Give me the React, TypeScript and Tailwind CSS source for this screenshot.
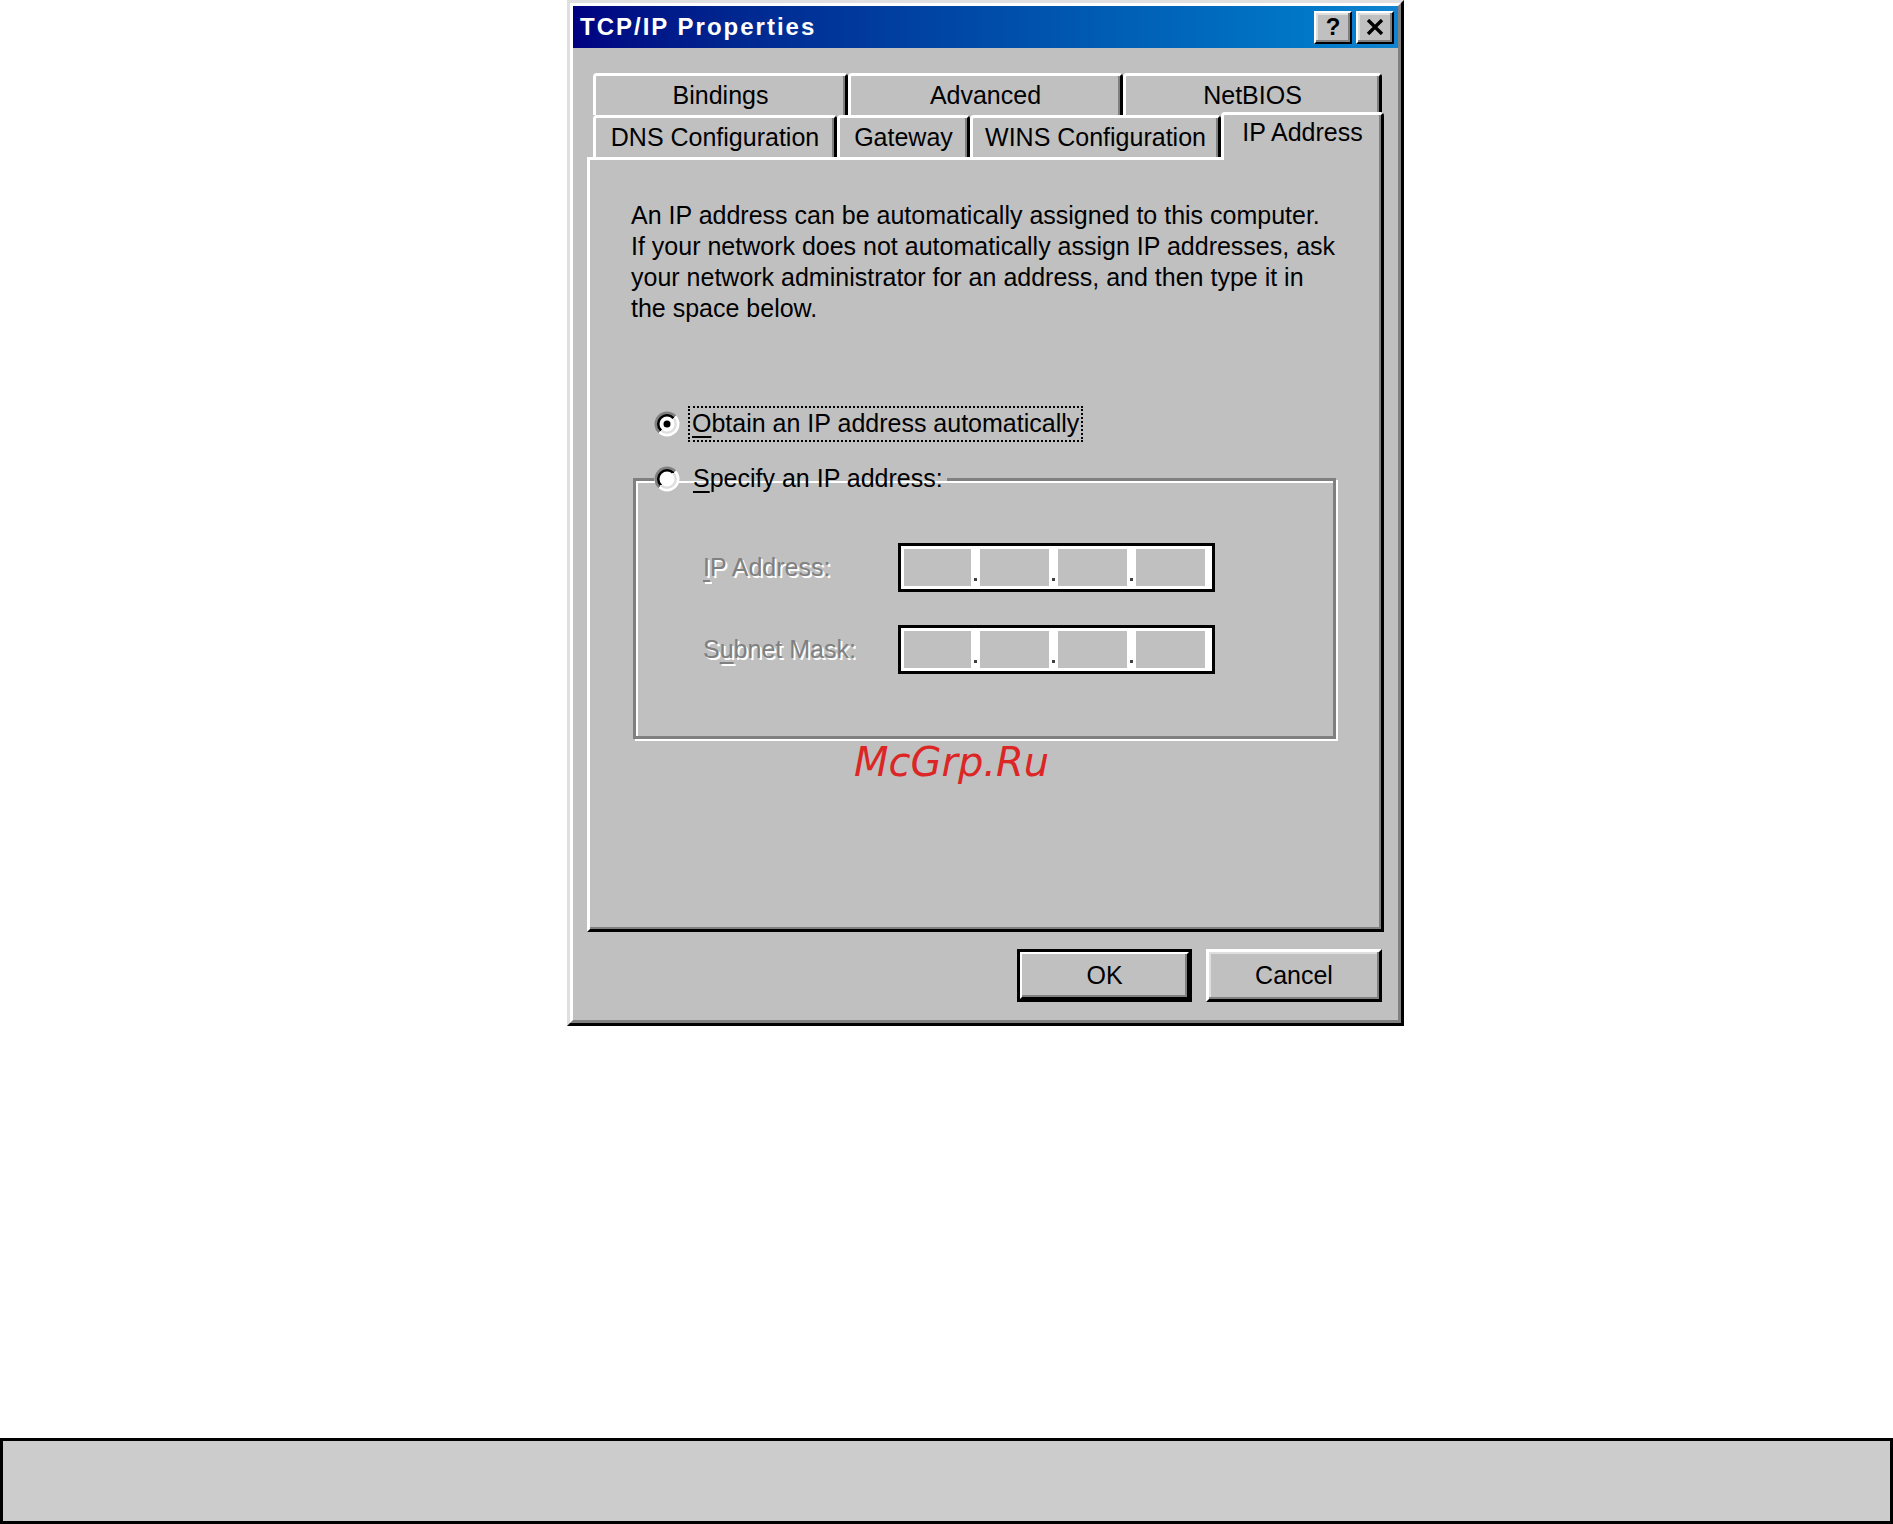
import React, { useId } from "react";

type TabProps = { label: string; width: string; selected?: boolean };

function Tab({ label, width, selected }: TabProps) {
  if (selected) {
    return (
      <div
        className={`${width} relative z-10 h-[48px] -mb-[3px] flex items-start justify-center leading-[34px] bg-[#c0c0c0] border-l-[3px] border-t-[3px] border-r-[3px] border-l-white border-t-white border-r-black rounded-t-[4px] shadow-[inset_-2px_0_0_#808080]`}
      >
        {label}
      </div>
    );
  }
  return (
    <div
      className={`${width} h-[42px] flex items-center justify-center bg-[#c0c0c0] border-l-[3px] border-t-[3px] border-r-[3px] border-l-white border-t-white border-r-black rounded-t-[4px] shadow-[inset_-2px_0_0_#808080]`}
    >
      {label}
    </div>
  );
}

function Radio({ checked }: { checked?: boolean }) {
  const id = useId().replace(/:/g, "");
  return (
    <svg width="26" height="26" viewBox="0 0 26 26" className="shrink-0">
      <defs>
        <linearGradient id={`o${id}`} x1="0" y1="0" x2="1" y2="1">
          <stop offset="0.5" stopColor="#808080" />
          <stop offset="0.5" stopColor="#ffffff" />
        </linearGradient>
        <linearGradient id={`i${id}`} x1="0" y1="0" x2="1" y2="1">
          <stop offset="0.5" stopColor="#000000" />
          <stop offset="0.5" stopColor="#dfdfdf" />
        </linearGradient>
      </defs>
      <circle cx="13" cy="13" r="12.5" fill={`url(#o${id})`} />
      <circle cx="13" cy="13" r="10" fill={`url(#i${id})`} />
      <circle cx="13" cy="13" r="7.5" fill="#ffffff" />
      {checked && <circle cx="13" cy="13" r="3.5" fill="#000000" />}
    </svg>
  );
}

function IpField() {
  const dot = (
    <div className="w-[9px] flex items-end justify-center pb-[5px]">
      <div className="w-[3px] h-[3px] bg-[#404040]" />
    </div>
  );
  return (
    <div className="w-[317px] h-[49px] shrink-0 border-[3px] border-black bg-white pt-[3px] pb-[3px] pl-[3px] pr-[7px] flex">
      <div className="w-[67px] bg-[#c0c0c0]" />
      {dot}
      <div className="w-[69px] bg-[#c0c0c0]" />
      {dot}
      <div className="w-[69px] bg-[#c0c0c0]" />
      {dot}
      <div className="w-[69px] bg-[#c0c0c0]" />
    </div>
  );
}

function TitleButton({ children }: { children: React.ReactNode }) {
  return (
    <div className="w-[38px] h-[33px] bg-[#c0c0c0] border-[2px] border-t-white border-l-white border-r-black border-b-black shadow-[inset_-2px_-2px_0_#808080,inset_2px_2px_0_#dfdfdf] flex items-center justify-center">
      {children}
    </div>
  );
}

export default function App() {
  return (
    <div className="w-[1893px] h-[1524px] bg-white flex flex-col font-['Liberation_Sans',Arial,sans-serif] text-black text-[25px]">
      <div className="ml-[567px] w-[837px] h-[1026px] shrink-0 bg-[#c0c0c0] border-[3px] border-t-[#dfdfdf] border-l-[#dfdfdf] border-r-black border-b-black">
        <div className="h-full flex flex-col border-[3px] border-t-white border-l-white border-r-[#808080] border-b-[#808080]">
          {/* caption */}
          <div className="h-[42px] shrink-0 flex items-center justify-between pl-[7px] pr-[4px] bg-gradient-to-r from-[#000080] to-[#1084d0]">
            <span className="text-white font-bold text-[24px] tracking-[2px]">TCP/IP Properties</span>
            <div className="flex gap-[4px]">
              <TitleButton>
                <span className="font-bold text-[24px] leading-none">?</span>
              </TitleButton>
              <TitleButton>
                <svg width="18" height="16" viewBox="0 0 18 16">
                  <path d="M2 1 L16 15 M16 1 L2 15" stroke="#000" strokeWidth="3.4" />
                </svg>
              </TitleButton>
            </div>
          </div>

          <div className="flex-1 flex flex-col px-[14px] pt-[25px]">
            <div className="flex pl-[6px] h-[42px]">
              <Tab label="Bindings" width="w-[255px]" />
              <Tab label="Advanced" width="w-[275px]" />
              <Tab label="NetBIOS" width="w-[259px]" />
            </div>
            <div className="flex items-end pl-[6px] h-[42px]">
              <Tab label="DNS Configuration" width="w-[244px]" />
              <Tab label="Gateway" width="w-[133px]" />
              <Tab label="WINS Configuration" width="w-[251px]" />
              <Tab label="IP Address" width="w-[163px]" selected />
            </div>

            {/* IP Address page */}
            <div className="h-[775px] shrink-0 flex flex-col border-[3px] border-t-white border-l-white border-r-black border-b-black shadow-[inset_-2px_-2px_0_#808080]">
              <p className="mt-[40px] ml-[41px] leading-[31px]">
                An IP address can be automatically assigned to this computer.
                <br />
                If your network does not automatically assign IP addresses, ask
                <br />
                your network administrator for an address, and then type it in
                <br />
                the space below.
              </p>

              <div className="mt-[82px] ml-[64px] h-[36px] flex items-center">
                <Radio checked />
                <span className="ml-[8px] px-[2px] h-[36px] flex items-center border-[2px] border-dotted border-black">
                  <span className="underline underline-offset-[4px] decoration-[2px]">O</span>btain an IP address automatically
                </span>
              </div>

              <fieldset className="mt-[19px] ml-[43px] w-[703px] border-[3px] border-[#808080] shadow-[inset_2px_2px_0_#ffffff,2px_2px_0_#ffffff] pb-[62px]">
                <legend className="ml-[18px] h-[36px] flex items-center">
                  <Radio />
                  <span className="ml-[13px] mr-[4px]">
                    <span className="underline underline-offset-[4px] decoration-[2px]">S</span>pecify an IP address:
                  </span>
                </legend>

                <div className="mt-[46px] ml-[67px] flex items-center">
                  <span className="w-[195px] text-[#808080] [text-shadow:2px_2px_0_#ffffff]">
                    <span className="underline underline-offset-[4px] decoration-[2px]">I</span>P Address:
                  </span>
                  <IpField />
                </div>
                <div className="mt-[33px] ml-[67px] flex items-center">
                  <span className="w-[195px] text-[#808080] [text-shadow:2px_2px_0_#ffffff]">
                    S<span className="underline underline-offset-[4px] decoration-[2px]">u</span>bnet Mask:
                  </span>
                  <IpField />
                </div>
              </fieldset>

              <div className="mt-[3px] ml-[264px] font-['DejaVu_Sans',sans-serif] italic text-[40px] leading-[40px] text-[#dc2626]">
                McGrp.Ru
              </div>
            </div>

            <div className="mt-[17px] flex justify-end gap-[14px] pr-[2px]">
              <div className="w-[175px] h-[53px] border-[3px] border-black">
                <div className="h-full flex items-center justify-center border-[2px] border-t-white border-l-white border-r-black border-b-black shadow-[inset_-2px_-2px_0_#808080]">
                  OK
                </div>
              </div>
              <div className="w-[176px] h-[53px] flex items-center justify-center border-[3px] border-t-white border-l-white border-r-black border-b-black shadow-[inset_-2px_-2px_0_#808080,inset_2px_2px_0_#dfdfdf]">
                Cancel
              </div>
            </div>
          </div>
        </div>
      </div>

      <div className="mt-[412px] h-[86px] shrink-0 border-[3px] border-black bg-[#cccccc]" />
    </div>
  );
}
